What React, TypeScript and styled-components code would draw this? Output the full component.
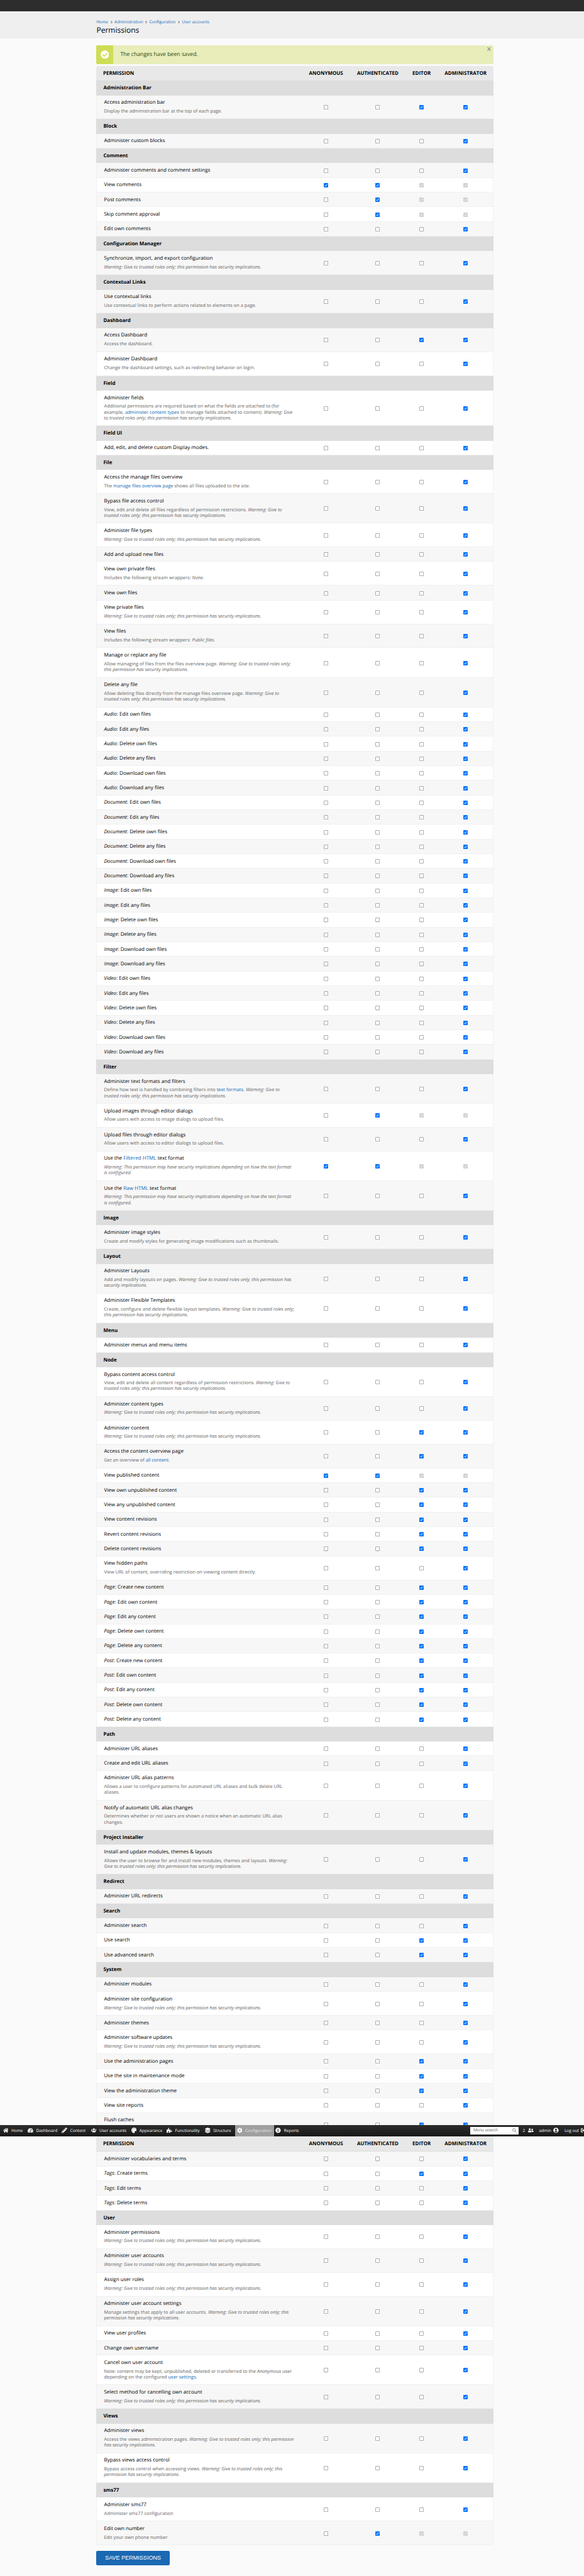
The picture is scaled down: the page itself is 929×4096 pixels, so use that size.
import React from 'react';
import styled, { createGlobalStyle, css } from 'styled-components';
import {
  FaHome, FaTachometerAlt, FaPencilAlt, FaUsers, FaPalette, FaPuzzlePiece, FaLayerGroup,
  FaCog, FaInfoCircle, FaSearch, FaUserFriends, FaUserCircle, FaSignOutAlt, FaCheckCircle,
} from 'react-icons/fa';

const SCALE = 0.5461;
const px = (n: number) => `${+(n * SCALE).toFixed(3)}px`;

const ROW = 42.72;
const ROW_WITH_DESCRIPTION = 69.4;
const DESCRIPTION_LINE = 16.9;

const GlobalStyle = createGlobalStyle`
  *, *::before, *::after { box-sizing: border-box; }
  html, body { margin: 0; padding: 0; overflow-x: hidden; }
  body {
    background: #fafafa;
    color: #000;
    font-family: "Open Sans", "Noto Sans", sans-serif;
    text-rendering: geometricPrecision;
  }
`;

const Page = styled.div`
  height: 4096px;
  overflow: hidden;
  display: flex;
  flex-direction: column;
`;

const TopBand = styled.div`
  flex: none;
  height: ${px(33)};
  background: #2d2d2d;
`;

const PageHeader = styled.header`
  flex: none;
  height: ${px(78)};
  padding: ${px(20)} 0 0 ${px(281)};
  background: #efefef;
`;

const Breadcrumb = styled.nav`
  display: flex;
  align-items: center;
  height: ${px(20)};
  font-size: ${px(12.05)};
  white-space: nowrap;
`;

const Link = styled.a`
  color: #0d69b5;
  text-decoration: none;
`;

const Chevron = styled.svg`
  width: ${px(5.5)};
  height: ${px(8)};
  margin: ${px(2)} ${px(6.4)} 0;
  fill: none;
  stroke: #808080;
  stroke-width: 2;
`;

const Title = styled.h1`
  margin: 0;
  font-size: ${px(22)};
  line-height: ${px(30)};
  font-weight: 400;
`;

const Content = styled.main`
  flex: none;
  width: ${px(1156.3)};
  margin-left: ${px(281)};
`;

const Message = styled.div`
  display: flex;
  height: ${px(55)};
  margin: ${px(20)} 0 ${px(6)};
  border-radius: ${px(4)};
  overflow: hidden;
  background: #e8edba;
  color: #2d4711;
`;

const MessageIcon = styled.div`
  display: flex;
  align-items: center;
  justify-content: center;
  width: ${px(48)};
  background: #cfdd56;
  color: #fff;
  font-size: ${px(25)};
`;

const MessageText = styled.div`
  flex: 1;
  padding-left: ${px(21.5)};
  font-size: ${px(16)};
  line-height: ${px(53)};
`;

const Dismiss = styled.svg`
  width: ${px(11)};
  height: ${px(11)};
  margin: ${px(7)} ${px(7.5)} 0 0;
  fill: none;
  stroke: #96988a;
  stroke-width: 2.2;
`;

const columns = css<{ $inset?: string }>`
  display: grid;
  grid-template-columns:
    1fr ${px(140.3)} ${px(161)} ${px(94.5)}
    calc(${px(162)} - ${(p) => p.$inset ?? '0px'});
  align-items: center;
`;

const HeadRow = styled.div<{ $underlined?: boolean; $inset?: string }>`
  ${columns}
  height: ${(p) => px(p.$underlined ? 45.2 : 42.8)};
  border-radius: ${px(5)} ${px(5)} 0 0;
  border-bottom: ${(p) => (p.$underlined ? '1px solid #dcdcdc' : 'none')};
  background: #e8e8e8;
  font-size: ${px(14.6)};
  font-weight: 700;
`;

const HeadCell = styled.div<{ $first?: boolean }>`
  padding-left: ${(p) => (p.$first ? px(19.5) : 0)};
  text-align: ${(p) => (p.$first ? 'left' : 'center')};
  text-transform: uppercase;
  white-space: nowrap;
`;

const GroupRow = styled.div`
  height: ${px(ROW)};
  padding-left: ${px(20)};
  background: #ddd;
  font-size: ${px(14.65)};
  line-height: ${px(ROW)};
  font-weight: 700;
`;

const Row = styled.div<{ $lines: number; $shaded: boolean; $inset?: string }>`
  ${columns}
  height: ${(p) => px(p.$lines ? ROW_WITH_DESCRIPTION + (p.$lines - 1) * DESCRIPTION_LINE : ROW)};
  border: 1px solid #f0f0f0;
  border-top: 0;
  background: ${(p) => (p.$shaded ? '#f7f7f7' : '#fff')};
`;

const LabelCell = styled.div`
  align-self: start;
  padding: ${px(12.2)} 0 0 calc(${px(22)} - 1px);
  white-space: pre;
`;

const Label = styled.div`
  font-size: ${px(14.78)};
  line-height: ${px(20)};
`;

const Description = styled.div`
  margin-top: ${px(7)};
  color: #666;
  font-size: ${px(13.57)};
  line-height: ${px(DESCRIPTION_LINE)};
`;

const CheckCell = styled.div`
  display: flex;
  justify-content: center;
  padding-top: ${px(2)};
`;

const CheckBoxSvg = styled.svg`
  display: block;
  width: ${px(13)};
  height: ${px(13)};
`;

const ClippedRow = styled.div`
  height: ${px(34.9)};
  overflow: hidden;
`;

const AdminBar = styled.div`
  flex: none;
  display: flex;
  align-items: center;
  width: 100%;
  height: ${px(33)};
  padding-left: ${px(3.5)};
  overflow: hidden;
  background: linear-gradient(#2d2d2d, #181818);
  color: #fff;
  font-size: ${px(12)};
  white-space: nowrap;
`;

const BarItem = styled.div<{ $width: number; $active?: boolean }>`
  flex: none;
  display: flex;
  align-items: center;
  gap: ${px(8.3)};
  width: ${(p) => px(p.$width)};
  height: 100%;
  padding-left: ${px(5)};
  background: ${(p) => (p.$active ? '#9f9f9f' : 'transparent')};
  color: ${(p) => (p.$active ? '#e6e6e6' : '#fff')};

  svg { flex: none; width: ${px(16)}; height: ${px(16)}; color: #fff; }
`;

const BarSearch = styled.div`
  flex: none;
  display: flex;
  align-items: center;
  justify-content: space-between;
  width: ${px(140)};
  height: ${px(22)};
  margin-left: auto;
  padding: 0 ${px(5)} 0 ${px(8.5)};
  background: #fff;
  color: #757575;
  font-family: "Liberation Sans", Arial, sans-serif;
  font-size: ${px(12.4)};

  svg { width: ${px(12)}; height: ${px(12)}; color: #999; }
`;

const BarRight = styled.div<{ $width: number; $gap: number; $indent?: number }>`
  flex: none;
  display: flex;
  align-items: center;
  gap: ${(p) => px(p.$gap)};
  width: ${(p) => px(p.$width)};
  padding-left: ${(p) => px(p.$indent ?? 0)};

  svg { flex: none; width: ${px(16)}; height: ${px(16)}; }
`;

const SaveButton = styled.button`
  display: block;
  width: ${px(213)};
  height: ${px(43.5)};
  margin: ${px(15.5)} 0 0 0;
  padding: 0;
  border: 0;
  border-radius: ${px(4)};
  background: #1a69b3;
  color: #fff;
  font-family: "Liberation Sans", Arial, sans-serif;
  font-size: ${px(16.6)};
  text-transform: uppercase;
`;

type State = '0' | '1' | 'x';

const CheckBox = ({ state }: { state: State }) => (
  <CheckBoxSvg viewBox="0 0 13 13">
    {state === '0' ? (
      <rect x="0.65" y="0.65" width="11.7" height="11.7" rx="1.8" fill="#fff" stroke="#707070" strokeWidth="1.3" />
    ) : (
      <>
        <rect width="13" height="13" rx="1.6" fill={state === '1' ? '#0075ff' : '#d2d2d2'} />
        <path d="M2.9 6.9 5.3 9.3 10 3.3" fill="none" stroke={state === '1' ? '#fff' : '#f0f0f0'} strokeWidth="1.8" />
      </>
    )}
  </CheckBoxSvg>
);

/* [label, checkbox states, description]; _text_ is emphasised, [text] is a link */
type Permission = [string, string?, string?];
type Group = { name: string; rows: Permission[] };

const ADMIN = '0001';
const WARNING = '_Warning: Give to trusted roles only; this permission has security implications._';

const fileRows: Permission[] = ['Audio', 'Document', 'Image', 'Video'].flatMap((type) =>
  ['Edit', 'Delete', 'Download'].flatMap((verb) =>
    ['own', 'any'].map((who): Permission => [`_${type}_: ${verb} ${who} files`]),
  ),
);
const contentRows: Permission[] = ['Page', 'Post'].flatMap((type) =>
  ['Create new', 'Edit own', 'Edit any', 'Delete own', 'Delete any'].map(
    (action): Permission => [`_${type}_: ${action} content`, '0011'],
  ),
);

const groups: Group[] = [
  { name: 'Administration Bar', rows: [
    ['Access administration bar', '0011', 'Display the administration bar at the top of each page.'],
  ] },
  { name: 'Block', rows: [['Administer custom blocks']] },
  { name: 'Comment', rows: [
    ['Administer comments and comment settings'],
    ['View comments', '11xx'],
    ['Post comments', '01xx'],
    ['Skip comment approval', '01xx'],
    ['Edit own comments'],
  ] },
  { name: 'Configuration Manager', rows: [
    ['Synchronize, import, and export configuration', ADMIN, WARNING],
  ] },
  { name: 'Contextual Links', rows: [
    ['Use contextual links', ADMIN, 'Use contextual links to perform actions related to elements on a page.'],
  ] },
  { name: 'Dashboard', rows: [
    ['Access Dashboard', '0011', 'Access the dashboard.'],
    ['Administer Dashboard', ADMIN, 'Change the dashboard settings, such as redirecting behavior on login.'],
  ] },
  { name: 'Field', rows: [
    ['Administer fields', ADMIN, 'Additional permissions are required based on what the fields are attached to (for\nexample, [administer content types] to manage fields attached to content). _Warning: Give\nto trusted roles only; this permission has security implications._'],
  ] },
  { name: 'Field UI', rows: [['Add, edit, and delete custom Display modes.']] },
  { name: 'File', rows: [
    ['Access the manage files overview', ADMIN, 'The [manage files overview page] shows all files uploaded to the site.'],
    ['Bypass file access control', ADMIN, 'View, edit and delete all files regardless of permission restrictions. _Warning: Give to\ntrusted roles only; this permission has security implications._'],
    ['Administer file types', ADMIN, WARNING],
    ['Add and upload new files'],
    ['View own private files', ADMIN, 'Includes the following stream wrappers: _None_.'],
    ['View own files'],
    ['View private files', ADMIN, WARNING],
    ['View files', ADMIN, 'Includes the following stream wrappers: _Public files_.'],
    ['Manage or replace any file', ADMIN, 'Allow managing of files from the files overview page. _Warning: Give to trusted roles only;\nthis permission has security implications._'],
    ['Delete any file', ADMIN, 'Allow deleting files directly from the manage files overview page. _Warning: Give to\ntrusted roles only; this permission has security implications._'],
    ...fileRows,
  ] },
  { name: 'Filter', rows: [
    ['Administer text formats and filters', ADMIN, 'Define how text is handled by combining filters into [text formats]. _Warning: Give to\ntrusted roles only; this permission has security implications._'],
    ['Upload images through editor dialogs', '01xx', 'Allow users with access to image dialogs to upload files.'],
    ['Upload files through editor dialogs', ADMIN, 'Allow users with access to editor dialogs to upload files.'],
    ['Use the [Filtered HTML] text format', '11xx', '_Warning: This permission may have security implications depending on how the text format\nis configured._'],
    ['Use the [Raw HTML] text format', ADMIN, '_Warning: This permission may have security implications depending on how the text format\nis configured._'],
  ] },
  { name: 'Image', rows: [
    ['Administer image styles', ADMIN, 'Create and modify styles for generating image modifications such as thumbnails.'],
  ] },
  { name: 'Layout', rows: [
    ['Administer Layouts', ADMIN, 'Add and modify layouts on pages. _Warning: Give to trusted roles only; this permission has\nsecurity implications._'],
    ['Administer Flexible Templates', ADMIN, 'Create, configure and delete flexible layout templates. _Warning: Give to trusted roles only;\nthis permission has security implications._'],
  ] },
  { name: 'Menu', rows: [['Administer menus and menu items']] },
  { name: 'Node', rows: [
    ['Bypass content access control', ADMIN, 'View, edit and delete all content regardless of permission restrictions. _Warning: Give to\ntrusted roles only; this permission has security implications._'],
    ['Administer content types', ADMIN, WARNING],
    ['Administer content', '0011', WARNING],
    ['Access the content overview page', '0011', 'Get an overview of [all content.]'],
    ['View published content', '11xx'],
    ['View own unpublished content', '0011'],
    ['View any unpublished content', '0011'],
    ['View content revisions', '0011'],
    ['Revert content revisions', '0011'],
    ['Delete content revisions', '0011'],
    ['View hidden paths', ADMIN, 'View URL of content, overriding restriction on viewing content directly.'],
    ...contentRows,
  ] },
  { name: 'Path', rows: [
    ['Administer URL aliases'],
    ['Create and edit URL aliases'],
    ['Administer URL alias patterns', ADMIN, 'Allows a user to configure patterns for automated URL aliases and bulk delete URL\naliases.'],
    ['Notify of automatic URL alias changes', ADMIN, 'Determines whether or not users are shown a notice when an automatic URL alias\nchanges.'],
  ] },
  { name: 'Project Installer', rows: [
    ['Install and update modules, themes & layouts', ADMIN, 'Allows the user to browse for and install new modules, themes and layouts. _Warning:\nGive to trusted roles only; this permission has security implications._'],
  ] },
  { name: 'Redirect', rows: [['Administer URL redirects']] },
  { name: 'Search', rows: [
    ['Administer search'],
    ['Use search', '0011'],
    ['Use advanced search', '0011'],
  ] },
  { name: 'System', rows: [
    ['Administer modules'],
    ['Administer site configuration', ADMIN, WARNING],
    ['Administer themes'],
    ['Administer software updates', ADMIN, WARNING],
    ['Use the administration pages', '0011'],
    ['Use the site in maintenance mode', '0011'],
    ['View the administration theme', '0011'],
    ['View site reports'],
  ] },
];

const taxonomyRows: Permission[] = [
  ['Administer vocabularies and terms'],
  ['_Tags_: Create terms', '0011'],
  ['_Tags_: Edit terms'],
  ['_Tags_: Delete terms'],
];

const laterGroups: Group[] = [
  { name: 'User', rows: [
    ['Administer permissions', ADMIN, WARNING],
    ['Administer user accounts', ADMIN, WARNING],
    ['Assign user roles', ADMIN, WARNING],
    ['Administer user account settings', ADMIN, 'Manage settings that apply to all user accounts. _Warning: Give to trusted roles only; this\npermission has security implications._'],
    ['View user profiles'],
    ['Change own username'],
    ['Cancel own user account', ADMIN, 'Note: content may be kept, unpublished, deleted or transferred to the _Anonymous_ user\ndepending on the configured [user settings.]'],
    ['Select method for cancelling own account', ADMIN, WARNING],
  ] },
  { name: 'Views', rows: [
    ['Administer views', ADMIN, 'Access the views administration pages. _Warning: Give to trusted roles only; this permission\nhas security implications._'],
    ['Bypass views access control', ADMIN, 'Bypass access control when accessing views. _Warning: Give to trusted roles only; this\npermission has security implications._'],
  ] },
  { name: 'sms77', rows: [
    ['Administer sms77', ADMIN, 'Administer sms77 configuration'],
    ['Edit own number', '01xx', 'Edit your own phone number'],
  ] },
];

const rich = (text: string) =>
  text.split(/(_[^_]+_|\[[^\]]+\])/).map((part, i) => {
    if (part.startsWith('_')) return <em key={i}>{part.slice(1, -1)}</em>;
    if (part.startsWith('[')) return <Link key={i}>{part.slice(1, -1)}</Link>;
    return part;
  });

const PermissionRow = ({ data, shaded }: { data: Permission; shaded: boolean }) => {
  const [label, states = ADMIN, description] = data;
  return (
    <Row $lines={description ? description.split('\n').length : 0} $shaded={shaded} $inset="1px">
      <LabelCell>
        <Label>{rich(label)}</Label>
        {description && <Description>{rich(description)}</Description>}
      </LabelCell>
      {states.split('').map((s, i) => (
        <CheckCell key={i}><CheckBox state={s as State} /></CheckCell>
      ))}
    </Row>
  );
};

const TableHead = ({ underlined }: { underlined?: boolean }) => (
  <HeadRow $underlined={underlined}>
    <HeadCell $first>Permission</HeadCell>
    <HeadCell>Anonymous</HeadCell>
    <HeadCell>Authenticated</HeadCell>
    <HeadCell>Editor</HeadCell>
    <HeadCell>Administrator</HeadCell>
  </HeadRow>
);

/* Stripes alternate over every table row, group headings included. */
const Groups = ({ items, start }: { items: Group[]; start: number }) => {
  let index = start;
  return (
    <>
      {items.map((group) => {
        index += 1;
        return (
          <React.Fragment key={group.name}>
            <GroupRow>{group.name}</GroupRow>
            {group.rows.map((row) => {
              const shaded = index % 2 === 1;
              index += 1;
              return <PermissionRow key={row[0]} data={row} shaded={shaded} />;
            })}
          </React.Fragment>
        );
      })}
    </>
  );
};

const Separator = () => (
  <Chevron viewBox="0 0 5.5 8"><path d="M1.2 0.5 4.2 4 1.2 7.5" /></Chevron>
);

const App = () => (
  <>
    <GlobalStyle />
    <Page>
      <TopBand />
      <PageHeader>
        <Breadcrumb>
          <Link>Home</Link><Separator />
          <Link>Administration</Link><Separator />
          <Link>Configuration</Link><Separator />
          <Link>User accounts</Link>
        </Breadcrumb>
        <Title>Permissions</Title>
      </PageHeader>
      <Content>
        <Message>
          <MessageIcon><FaCheckCircle /></MessageIcon>
          <MessageText>The changes have been saved.</MessageText>
          <Dismiss viewBox="0 0 11 11"><path d="M1 0 10 11M10 0 1 11" /></Dismiss>
        </Message>
        <TableHead />
        <Groups items={groups} start={0} />
        <ClippedRow>
          <PermissionRow data={['Flush caches', '0011', ' ']} shaded />
        </ClippedRow>
      </Content>
      <AdminBar>
        <BarItem $width={72.5}><FaHome />Home</BarItem>
        <BarItem $width={99}><FaTachometerAlt />Dashboard</BarItem>
        <BarItem $width={85}><FaPencilAlt />Content</BarItem>
        <BarItem $width={117}><FaUsers />User accounts</BarItem>
        <BarItem $width={104}><FaPalette />Appearance</BarItem>
        <BarItem $width={111}><FaPuzzlePiece />Functionality</BarItem>
        <BarItem $width={93}><FaLayerGroup />Structure</BarItem>
        <BarItem $width={113} $active><FaCog />Configuration</BarItem>
        <BarItem $width={90}><FaInfoCircle />Reports</BarItem>
        <BarSearch>Menu search<FaSearch /></BarSearch>
        <BarRight $width={60} $gap={8.5} $indent={12.5}>2<FaUserFriends /></BarRight>
        <BarRight $width={74} $gap={6.5}>admin<FaUserCircle /></BarRight>
        <BarRight $width={57} $gap={5}>Log out<FaSignOutAlt /></BarRight>
      </AdminBar>
      <Content>
        <TableHead underlined />
        {taxonomyRows.map((row, i) => (
          <PermissionRow key={row[0]} data={row} shaded={i % 2 === 0} />
        ))}
        <Groups items={laterGroups} start={1} />
        <SaveButton>Save permissions</SaveButton>
      </Content>
    </Page>
  </>
);

export default App;
